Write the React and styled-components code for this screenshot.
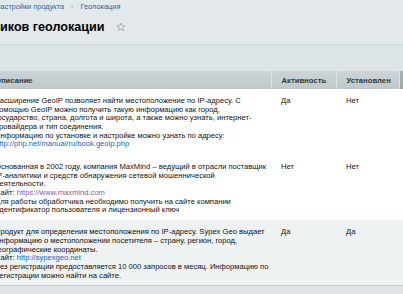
import React from "react";
import styled, { createGlobalStyle } from "styled-components";

const GlobalStyle = createGlobalStyle`
  html, body {
    margin: 0;
    padding: 0;
    background: #e3e9eb;
    overflow: hidden;
  }
  body {
    font-family: "Liberation Sans", Arial, sans-serif;
    color: #000;
  }
`;

const rows = [
  {
    lines: [
      "Расширение GeoIP позволяет найти местоположение по IP-адресу. С",
      "помощью GeoIP можно получить такую информацию как город,",
      "государство, страна, долгота и широта, а также можно узнать, интернет-",
      "провайдера и тип соединения.",
      "Информацию по установке и настройке можно узнать по адресу:",
    ],
    link: { href: "http://php.net/manual/ru/book.geoip.php", label: "http://php.net/manual/ru/book.geoip.php" },
    after: [],
    active: "Да",
    installed: "Нет",
  },
  {
    lines: [
      "Основанная в 2002 году, компания MaxMind – ведущий в отрасли поставщик",
      "IP-аналитики и средств обнаружения сетевой мошеннической",
      "деятельности.",
    ],
    site: { href: "https://www.maxmind.com", label: "https://www.maxmind.com", visited: true },
    after: [
      "Для работы обработчика необходимо получить на сайте компании",
      "идентификатор пользователя и лицензионный ключ",
    ],
    active: "Нет",
    installed: "Нет",
  },
  {
    lines: [
      "Продукт для определения местоположения по IP-адресу. Sypex Geo выдает",
      "информацию о местоположении посетителя – страну, регион, город,",
      "географические координаты.",
    ],
    site: { href: "http://sypexgeo.net", label: "http://sypexgeo.net" },
    after: [
      "Без регистрации предоставляется 10 000 запросов в месяц. Информацию по",
      "регистрации можно найти на сайте.",
    ],
    active: "Да",
    installed: "Да",
  },
];

const StarIcon = () => (
  <svg width="10" height="10" viewBox="0 0 24 24" fill="none" stroke="#a7b1b5" strokeWidth="2.4" strokeLinejoin="round">
    <path d="M12 2.5l2.9 6.2 6.6.7-5 4.5 1.4 6.6L12 17.2l-5.9 3.3 1.4-6.6-5-4.5 6.6-.7z" />
  </svg>
);

export default function App() {
  return (
    <>
      <GlobalStyle />
      <Page>
        <Top>
          <Crumbs>
            <Crumb>Настройки продукта</Crumb>
            <CrumbArrow>›</CrumbArrow>
            <Crumb>Геолокация</Crumb>
          </Crumbs>
          <TitleRow>
            <Title>иков геолокации</Title>
            <StarIcon />
          </TitleRow>
        </Top>
        <Toolbar />
        <Table>
          <colgroup>
            <col style={{ width: 286 }} />
            <col style={{ width: 65 }} />
            <col style={{ width: 63 }} />
            <col style={{ width: 40 }} />
          </colgroup>
          <thead>
            <tr>
              <Th>Описание</Th>
              <Th>Активность</Th>
              <Th>Установлен</Th>
              <Th $dark />
            </tr>
          </thead>
          <tbody>
            {rows.map((row, i) => (
              <Row key={i} $alt={i === 2} $first={i === 0}>
                <Td>
                  {row.lines.map((l, j) => (
                    <Line key={j}>{l}</Line>
                  ))}
                  {row.link && (
                    <Line>
                      <Link href={row.link.href}>{row.link.label}</Link>
                    </Line>
                  )}
                  {row.site && (
                    <Line>
                      Сайт: <Link href={row.site.href} $visited={row.site.visited}>{row.site.label}</Link>
                    </Line>
                  )}
                  {row.after.map((l, j) => (
                    <Line key={"a" + j}>{l}</Line>
                  ))}
                </Td>
                <Td>{row.active}</Td>
                <Td>{row.installed}</Td>
                <Td />
              </Row>
            ))}
          </tbody>
        </Table>
        <Footer />
      </Page>
    </>
  );
}

const Page = styled.div`
  width: 403px;
  height: 294px;
  overflow: hidden;
`;

const Top = styled.div`
  height: 44px;
  border-bottom: 1px solid #d2dadd;
  background: #e3e9eb;
`;

const Crumbs = styled.div`
  display: flex;
  align-items: center;
  gap: 7px;
  height: 10px;
  padding-top: 2px;
  margin-left: -5px;
  font-size: 7.4px;
  line-height: 10px;
`;

const Crumb = styled.a`
  color: #2d64a0;
  text-decoration: none;
`;

const CrumbArrow = styled.span`
  color: #96a2a6;
  font-size: 7px;
`;

const TitleRow = styled.div`
  display: flex;
  align-items: center;
  gap: 11px;
  margin-top: 7px;
  height: 16px;
`;

const Title = styled.h1`
  margin: 0;
  font-size: 12.6px;
  line-height: 16px;
  font-weight: bold;
  color: #000;
`;

const Toolbar = styled.div`
  height: 26px;
  background: #dde4e6;
`;

const Table = styled.table`
  table-layout: fixed;
  border-collapse: collapse;
  border-spacing: 0;
  margin-left: -15px;
  width: 454px;
`;

const Th = styled.th`
  height: 18px;
  padding: 0 10px;
  text-align: left;
  font-size: 7.7px;
  font-weight: bold;
  color: #2f3a3d;
  white-space: nowrap;
  background: ${(p) => (p.$dark ? "linear-gradient(#aab4b7, #9da8ab)" : "linear-gradient(#cbd3d6, #bfc9cc)")};
  border-right: 1px solid #dce3e5;
  box-sizing: border-box;
`;

const Row = styled.tr`
  background: ${(p) => (p.$alt ? "#eef2f3" : "#ffffff")};

  td {
    height: ${(p) => (p.$first ? "66px" : "65px")};
  }
`;

const Td = styled.td`
  box-sizing: border-box;
  padding: 8px 10px 5px;
  vertical-align: top;
  font-size: 7.6px;
  line-height: 8.7px;
  color: #111;
  white-space: nowrap;
  overflow: hidden;
`;

const Line = styled.div`
  height: 8.7px;
`;

const Link = styled.a`
  color: ${(p) => (p.$visited ? "#8b57a9" : "#2066b3")};
  text-decoration: none;
`;

const Footer = styled.div`
  height: 12px;
  border-top: 1px solid #c8d0d3;
  background: #dfe5e7;
`;
